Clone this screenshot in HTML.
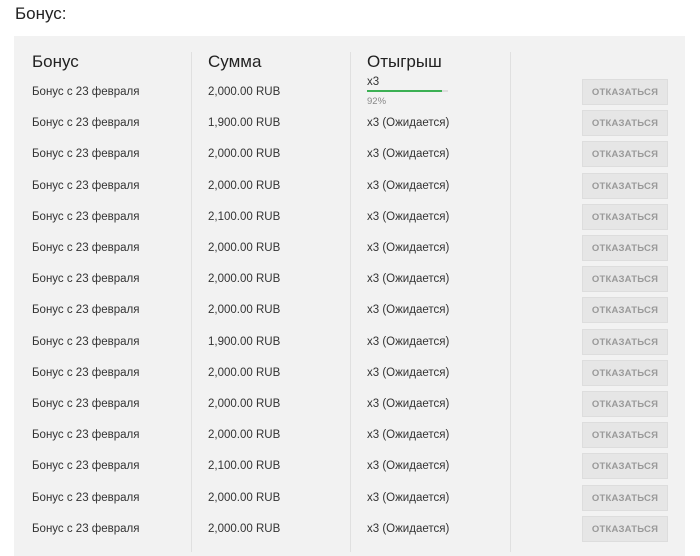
<!DOCTYPE html>
<html><head><meta charset="utf-8"><style>
body{margin:0;width:700px;height:548px;background:#fff;font-family:"Liberation Sans",Arial,sans-serif;color:#333;overflow:hidden;position:relative}
.t{position:absolute;left:15px;top:4px;font-size:17px;color:#222}
.p{position:absolute;left:14px;top:36px;width:671px;height:520px;background:#f2f2f2}
.d{position:absolute;top:52px;width:1px;height:500px;background:#e0e0e0}
.h{position:absolute;top:52px;font-size:17px;color:#222}
.c{position:absolute;font-size:11.5px;color:#333;white-space:nowrap}
.b{position:absolute;left:582px;width:86px;height:26px;background:#e6e6e6;border:1px solid #ddd;box-sizing:border-box;font-size:9.5px;font-weight:bold;color:#999;text-align:center;line-height:25px;letter-spacing:0.2px}
</style></head><body>
<div class="t">Бонус:</div>
<div class="p"></div>
<div class="d" style="left:191px"></div>
<div class="d" style="left:350px"></div>
<div class="d" style="left:510px"></div>
<div class="h" style="left:32px">Бонус</div>
<div class="h" style="left:208px">Сумма</div>
<div class="h" style="left:367px">Отыгрыш</div>
<div class="c" style="left:367px;top:76px">x3</div>
<div style="position:absolute;left:367px;top:90px;width:81px;height:2px;background:#ddd"></div>
<div style="position:absolute;left:367px;top:90px;width:75px;height:2px;background:#3cb054"></div>
<div class="c" style="left:367px;top:96px;font-size:9.5px;color:#888">92%</div>
<div id="rows"></div>
<script>
var s=["2,000.00","1,900.00","2,000.00","2,000.00","2,100.00","2,000.00","2,000.00","2,000.00","1,900.00","2,000.00","2,000.00","2,000.00","2,100.00","2,000.00","2,000.00"];
var h="";
for(var i=0;i<15;i++){var y=86+i*31.2;
h+='<div class="c" style="left:32px;top:'+y+'px">Бонус с 23 февраля</div>';
h+='<div class="c" style="left:208px;top:'+y+'px">'+s[i]+' RUB</div>';
if(i>0)h+='<div class="c" style="left:367px;top:'+y+'px">x3 (Ожидается)</div>';
h+='<div class="b" style="top:'+(79+i*31.2)+'px">ОТКАЗАТЬСЯ</div>';}
document.getElementById("rows").innerHTML=h;
</script>
</body></html>
